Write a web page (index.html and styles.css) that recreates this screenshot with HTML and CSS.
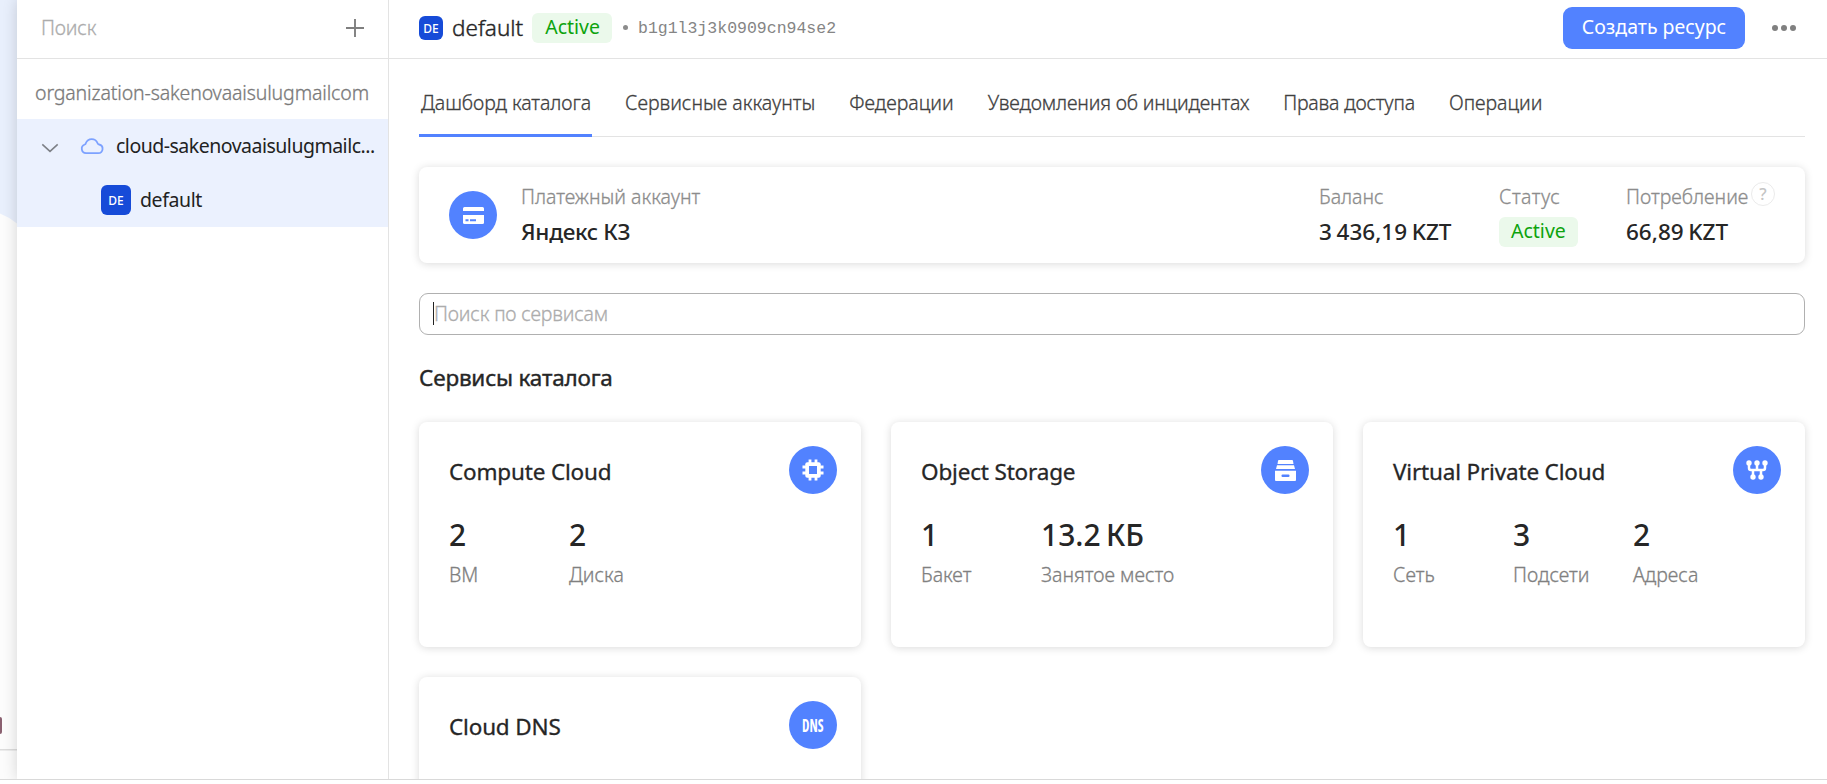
FILE: index.html
```html
<!DOCTYPE html>
<html lang="ru">
<head>
<meta charset="utf-8">
<title>default — Дашборд каталога</title>
<link rel="stylesheet" href="styles.css">
</head>
<body>
<div class="app">
  <div class="backdrop">
    <svg class="backdrop-art" width="17" height="779" viewBox="0 0 17 779">
      <rect width="17" height="779" fill="#fcfcfc"/>
      <path d="M0 0h17v223.500Q9 217 0 213.500z" fill="#e8effc"/>
      <rect x="-10" y="717" width="12" height="17" rx="2" fill="#8a6070"/>
      <rect y="749" width="17" height="1.500" fill="#dcdcdc"/>
    </svg>
  </div>
  <aside class="sidebar">
    <div class="sidebar-search">
      <span class="hint">Поиск</span>
      <svg width="18" height="18" viewBox="0 0 18 18" stroke="#7f7f7f" stroke-width="1.900"><path d="M9 0v18M0 9h18"/></svg>
    </div>
    <div class="org"><span class="org-name">organization-sakenovaaisulugmailcom</span></div>
    <div class="tree">
      <div class="tree-row">
        <svg class="chevron" width="18" height="10" viewBox="0 0 18 10" fill="none" stroke="#7d8087" stroke-width="1.600"><path d="M1.300 1.300L9 8.300l7.700-7"/></svg>
        <svg class="cloud" width="24" height="19" viewBox="0 0 24 19" fill="none" stroke="#7da2ff" stroke-width="1.800" stroke-linejoin="round"><path d="M6 17.200h12.200a4.400 4.400 0 0 0 .9-8.700 2 2 0 0 1-1.500-1.300 6.300 6.300 0 0 0-11.800 0A2 2 0 0 1 4.700 8.500 4.500 4.500 0 0 0 6 17.200z"/></svg>
        <span class="cloud-name">cloud-sakenovaaisulugmailc...</span>
      </div>
      <div class="tree-row tree-row-folder">
        <span class="avatar">DE</span>
        <span class="folder-name">default</span>
      </div>
    </div>
  </aside>
  <main class="main">
    <header class="topbar">
      <span class="avatar avatar-s">DE</span>
      <span class="topbar-name">default</span>
      <span class="badge badge-top">Active</span>
      <i class="dot"></i>
      <span class="folder-id">b1g1l3j3k0909cn94se2</span>
      <button class="create">Создать ресурс</button>
      <svg class="more" width="24" height="6" viewBox="0 0 24 6" fill="#808080"><circle cx="3" cy="3" r="3"/><circle cx="12" cy="3" r="3"/><circle cx="21" cy="3" r="3"/></svg>
    </header>
    <div class="content">
      <nav class="tabs">
        <a class="tab tab-active">Дашборд каталога</a>
        <a class="tab">Сервисные аккаунты</a>
        <a class="tab">Федерации</a>
        <a class="tab tab-tight">Уведомления об инцидентах</a>
        <a class="tab tab-tight">Права доступа</a>
        <a class="tab">Операции</a>
      </nav>
      <section class="billing">
        <span class="round"><svg width="21" height="17" viewBox="0 0 21 17"><path d="M1.500 0h18A1.500 1.500 0 0 1 21 1.500V4H0V1.500A1.500 1.500 0 0 1 1.500 0z" fill="#fff"/><path d="M0 8h21v7.500a1.500 1.500 0 0 1-1.500 1.500h-18A1.500 1.500 0 0 1 0 15.500z" fill="#fff"/><path d="M2.500 12.200h3v2h-3zM7 12.200h6v2H7z" fill="#5282ff"/></svg></span>
        <div class="fact fact-account"><span class="label">Платежный аккаунт</span><span class="value value-name">Яндекс КЗ</span></div>
        <div class="fact fact-balance"><span class="label">Баланс</span><span class="value">3 436,19 KZT</span></div>
        <div class="fact fact-status"><span class="label">Статус</span><span class="badge">Active</span></div>
        <div class="fact fact-usage"><span class="label">Потребление<span class="help">?</span></span><span class="value">66,89 KZT</span></div>
      </section>
      <div class="service-search"><i class="caret"></i><span class="hint">Поиск по сервисам</span></div>
      <h2 class="heading">Сервисы каталога</h2>
      <div class="cards">
        <article class="card">
          <div class="card-head"><h3>Compute Cloud</h3>
            <span class="round"><svg width="22" height="22" viewBox="0 0 22 22"><path d="M8 .5v21M14 .5v21M.5 8h21M.5 14h21" stroke="#fff" stroke-width="2.800"/><rect x="3.300" y="3.300" width="15.400" height="15.400" rx="2" fill="#fff"/><rect x="7" y="7" width="8" height="8" fill="#5282ff"/></svg></span></div>
          <div class="stats"><div class="stat"><b>2</b><span>ВМ</span></div><div class="stat"><b>2</b><span>Диска</span></div></div>
        </article>
        <article class="card">
          <div class="card-head"><h3>Object Storage</h3>
            <span class="round"><svg width="21" height="21" viewBox="0 0 21 21" fill="#fff"><path d="M4 0h13a1 1 0 0 1 1 1l.5 3h-16L3 1a1 1 0 0 1 1-1zM2 5.300h17L20 9H1zM0 10.800h21V20a1 1 0 0 1-1 1H1a1 1 0 0 1-1-1z"/><rect x="6.500" y="14.500" width="8" height="2.500" rx="1" fill="#5282ff"/></svg></span></div>
          <div class="stats"><div class="stat"><b>1</b><span>Бакет</span></div><div class="stat"><b>13.2 КБ</b><span>Занятое место</span></div></div>
        </article>
        <article class="card">
          <div class="card-head"><h3>Virtual Private Cloud</h3>
            <span class="round"><svg width="22" height="20" viewBox="0 0 22 20"><g fill="none" stroke="#fff" stroke-width="2.500"><path d="M3 3v5q0 2 2 2h12q2 0 2-2V3M11 3v7M7 10v7M15 10v7"/></g><g fill="#fff"><circle cx="3" cy="3" r="2.700"/><circle cx="11" cy="3" r="2.700"/><circle cx="19" cy="3" r="2.700"/><circle cx="7" cy="17" r="2.700"/><circle cx="15" cy="17" r="2.700"/></g></svg></span></div>
          <div class="stats"><div class="stat"><b>1</b><span>Сеть</span></div><div class="stat"><b>3</b><span>Подсети</span></div><div class="stat"><b>2</b><span>Адреса</span></div></div>
        </article>
        <article class="card">
          <div class="card-head"><h3>Cloud DNS</h3><span class="round"><span class="round-text">DNS</span></span></div>
        </article>
      </div>
    </div>
  </main>
</div>
</body>
</html>
```
FILE: styles.css
```css
* { box-sizing: border-box; }
body { margin: 0; background: #fff; color: #262626; font: 300 19.5px/27px "Noto Sans", sans-serif; -webkit-text-stroke: .3px; overflow: hidden; }
.app { display: flex; height: 780px; border-bottom: 1px solid #d9d9d9; overflow: hidden; }
.backdrop { flex: none; width: 17px; background: #fcfcfc; }
.backdrop-art { display: block; }
.sidebar { flex: none; width: 372px; background: #fff; border-right: 1.5px solid #e3e3e3; box-shadow: 0 0 14px rgba(0, 0, 0, .16); clip-path: inset(0 0 0 -17px); }
.sidebar-search { height: 59px; padding: 0 24px 3px 24px; display: flex; align-items: center; justify-content: space-between; border-bottom: 1px solid #e3e3e3; }
.hint { color: #acacac; letter-spacing: -.17px; }
.org { height: 60px; padding: 20px 0 0 18px; color: #7a7a7a; letter-spacing: -.13px; }
.tree { height: 108px; background: #ebf1fe; color: #222; }
.tree-row { height: 54px; display: flex; align-items: center; white-space: nowrap; }
.chevron { margin: 3px 0 0 24px; }
.cloud { margin: 0 0 1px 21px; }
.cloud-name { margin: 0 0 2px 12px; letter-spacing: -.5px; font-weight: 400; -webkit-text-stroke: 0; }
.tree-row-folder { padding-left: 84px; }
.folder-name { margin: 0 0 2px 9px; letter-spacing: -.4px; font-weight: 400; -webkit-text-stroke: 0; }
.avatar { width: 30px; height: 30px; border-radius: 6px; background: #164bd8; color: #fff; font: 500 12px/30px "Noto Sans", sans-serif; text-align: center; padding-top: 1px; -webkit-text-stroke: 0; }
.avatar-s { width: 24px; height: 24px; line-height: 26px; padding: 0; border-radius: 6px; }
.main { flex: 1; min-width: 0; }
.topbar { height: 59px; padding: 0 31px 3px 30px; display: flex; align-items: center; border-bottom: 1px solid #e3e3e3; }
.topbar-name { margin-left: 9px; font-size: 22.5px; -webkit-text-stroke: .4px; }
.badge { display: inline-block; height: 30px; line-height: 28px; border-radius: 6px; padding: 0 12px; background: #ebf9eb; color: #0da30d; font-weight: 400; -webkit-text-stroke: 0; }
.badge-top { margin-left: 9px; padding: 0 12px 0 13px; }
.dot { width: 5px; height: 5px; border-radius: 50%; background: #8c8c8c; margin-left: 11px; }
.folder-id { margin: 3px 0 0 10px; font: 16.5px/24px "Liberation Mono", monospace; color: #858585; -webkit-text-stroke: 0; }
.create { margin-left: auto; width: 182px; height: 42px; border: 0; border-radius: 9px; background: #5282ff; color: #fff; font: 400 19.5px/38px "Noto Sans", sans-serif; padding: 0 0 2px; -webkit-text-stroke: 0; }
.more { margin-left: 27px; }
.content { padding: 30px 22px 0 30px; }
.tabs { display: flex; gap: 31px; height: 48px; border-bottom: 1.5px solid #e3e3e3; color: #404040; white-space: nowrap; }
.tab { height: 48px; padding: 0 1px 0 2px; }
.tab-tight { padding: 0 1px; margin-left: 1px; letter-spacing: -.17px; }
.tab-active { padding: 0 1px 0 2px; border-bottom: 3px solid #5282ff; letter-spacing: -.06px; }
.billing { display: flex; margin-top: 30px; height: 96px; padding: 16px 30px 0; border-radius: 8px; box-shadow: 0 1px 9px rgba(0, 0, 0, .15); }
.round { flex: none; width: 48px; height: 48px; border-radius: 50%; background: #5282ff; display: flex; align-items: center; justify-content: center; }
.billing .round { margin-top: 8px; }
.fact { display: flex; flex-direction: column; align-items: flex-start; white-space: nowrap; }
.fact-account { margin-left: 24px; flex: 1; }
.fact-balance { width: 180px; }
.fact-status { width: 127px; }
.fact-status .label { letter-spacing: .5px; }
.fact-usage { width: 149px; }
.label { color: #8c8c8c; position: relative; }
.value { margin-top: 7px; font: 500 22.5px/30px "Noto Sans", sans-serif; word-spacing: -1.2px; -webkit-text-stroke: 0; }
.value-name { letter-spacing: -.3px; word-spacing: 0; }
.fact .badge { margin-top: 7px; }
.help { position: absolute; left: 125px; top: -1px; width: 24px; height: 24px; border: 1.5px solid #ebebeb; border-radius: 50%; font: 500 16.5px/21px "Noto Sans", sans-serif; color: #c4c4c4; text-align: center; -webkit-text-stroke: 0; }
.service-search { margin-top: 30px; height: 42px; border: 1px solid #b0b0b0; border-radius: 9px; display: flex; align-items: center; padding: 0 0 1px 13px; }
.caret { width: 1px; height: 23px; background: #222; }
.heading { margin: 28px 0 29px; font: 400 22.5px/30px "Noto Sans", sans-serif; letter-spacing: -.2px; -webkit-text-stroke: .4px; }
.cards { display: grid; grid-template-columns: repeat(3, 442px); gap: 30px; }
.card { height: 225px; padding: 24px 24px 0 30px; border-radius: 8px; box-shadow: 0 1px 9px rgba(0, 0, 0, .15); }
.card-head { display: flex; justify-content: space-between; }
.card h3 { margin: 11px 0 0; font: 400 22.5px/30px "Noto Sans", sans-serif; letter-spacing: -.17px; -webkit-text-stroke: .3px; }
.round-text { color: #fff; font: 700 17px/1 "Open Sans", sans-serif; font-stretch: 75%; transform: scaleX(.78); -webkit-text-stroke: 0; }
.stats { display: flex; margin-top: 23px; }
.stat { width: 120px; white-space: nowrap; }
.stat b { display: block; font: 500 30px/36px "Noto Sans", sans-serif; word-spacing: -2.5px; -webkit-text-stroke: 0; }
.stat span { display: block; margin-top: 8px; color: #808080; }
```
